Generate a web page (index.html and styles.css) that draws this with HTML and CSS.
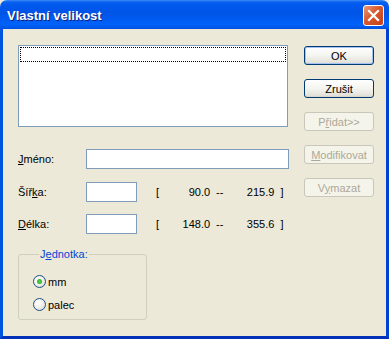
FILE: index.html
```html
<!DOCTYPE html>
<html lang="cs">
<head>
    <meta charset="UTF-8">
    <title>Vlastní velikost</title>
    <link rel="stylesheet" href="styles.css">
</head>
<body>
    <div class="window">
        <div class="titlebar">
            <span class="title">Vlastní velikost</span>
            <button class="close" type="button" aria-label="Zavřít">
                <svg width="13" height="13" viewBox="0 0 13 13">
                    <path d="M2 2 L11 11 M11 2 L2 11" stroke="#fff" stroke-width="2.2" stroke-linecap="square"/>
                </svg>
            </button>
        </div>
        <div class="client">
            <div class="main">
                <div class="listbox">
                    <div class="list-item"></div>
                </div>

                <div class="field-row first">
                    <label for="name"><u>J</u>méno:</label>
                    <input type="text" id="name" class="edit wide">
                </div>

                <div class="field-row">
                    <label for="width">Šíř<u>k</u>a:</label>
                    <input type="text" id="width" class="edit short">
                    <div class="range">
                        <span class="br">[</span>
                        <span class="num min">90.0</span>
                        <span class="dash">--</span>
                        <span class="num max">215.9</span>
                        <span class="br">]</span>
                    </div>
                </div>

                <div class="field-row last">
                    <label for="length"><u>D</u>élka:</label>
                    <input type="text" id="length" class="edit short">
                    <div class="range">
                        <span class="br">[</span>
                        <span class="num min">148.0</span>
                        <span class="dash">--</span>
                        <span class="num max">355.6</span>
                        <span class="br">]</span>
                    </div>
                </div>

                <fieldset class="group">
                    <legend>J<u>e</u>dnotka:</legend>
                    <label class="radio-row"><span class="radio checked"></span>mm</label>
                    <label class="radio-row"><span class="radio"></span>palec</label>
                </fieldset>
            </div>

            <div class="buttons">
                <button type="button" class="btn default">OK</button>
                <button type="button" class="btn">Zrušit</button>
                <button type="button" class="btn" disabled>P<u>ř</u>idat&gt;&gt;</button>
                <button type="button" class="btn" disabled><u>M</u>odifikovat</button>
                <button type="button" class="btn" disabled>V<u>y</u>mazat</button>
            </div>
        </div>
    </div>
</body>
</html>
```

FILE: styles.css
```css
body {
    margin: 0;
    background: #ece9d8;
    font-family: "Liberation Sans", Arial, sans-serif;
    font-size: 11px;
    color: #000;
}
.window {
    width: 389px;
    height: 339px;
    display: flex;
    flex-direction: column;
    box-sizing: border-box;
}
.titlebar {
    height: 29px;
    flex: none;
    display: flex;
    align-items: center;
    justify-content: space-between;
    padding: 0 5px 0 7px;
    border-radius: 7px 7px 0 0;
    background: linear-gradient(to bottom, #3d8cf7 0, #0a62f0 2px, #0058ee 5px, #0054e6 45%, #0062fa 85%, #0050e0 100%);
    box-sizing: border-box;
}
.title {
    color: #fff;
    font-weight: bold;
    font-size: 13px;
    text-shadow: 1px 1px 0 #0a1f83;
    padding-top: 1px;
}
.close {
    width: 21px;
    height: 21px;
    padding: 0;
    border: 1px solid #fff;
    border-radius: 3px;
    background: linear-gradient(135deg, #e89a7c 0, #d9592e 45%, #c4401c 100%);
    display: flex;
    align-items: center;
    justify-content: center;
    margin-top: 2px;
}
.client {
    flex: 1;
    display: flex;
    border-left: 3px solid #0052e0;
    border-right: 3px solid #0040d0;
    border-bottom: 3px solid #0030b8;
    background: #ece9d8;
}
.main {
    width: 286px;
    padding: 16px 0 0 15px;
    box-sizing: border-box;
}
.listbox {
    width: 270px;
    height: 82px;
    border: 1px solid #7f9db9;
    background: #fff;
    box-sizing: border-box;
    padding: 1px;
}
.list-item {
    height: 13px;
    border: 1px dotted #000;
}
.field-row {
    display: flex;
    align-items: center;
    margin-top: 13px;
    height: 20px;
}
.field-row.first {
    margin-top: 22px;
}
.field-row.last {
    margin-top: 12px;
}
.field-row label {
    width: 68px;
    flex: none;
}
.edit {
    height: 20px;
    margin: 0;
    padding: 0 3px;
    border: 1px solid #7f9db9;
    background: #fff;
    box-sizing: border-box;
    font: inherit;
}
.wide {
    width: 203px;
}
.short {
    width: 51px;
}
.range {
    display: flex;
    margin-left: 19px;
}
.num {
    text-align: right;
}
.min {
    width: 51px;
}
.dash {
    margin-left: 6px;
}
.max {
    width: 51px;
}
.range .br:last-child {
    margin-left: 6px;
}
.group {
    margin: 14px 0 0 0;
    width: 129px;
    padding: 14px 0 8px 14px;
    border: 1px solid #d0d0bf;
    border-radius: 3px;
    box-sizing: border-box;
}
.group legend {
    color: #0046d5;
    padding: 0 1px;
    margin-left: 6px;
    line-height: 13px;
}
.radio-row {
    display: flex;
    align-items: center;
    height: 13px;
    gap: 2px;
}
.radio-row + .radio-row {
    margin-top: 10px;
}
.radio {
    width: 13px;
    height: 13px;
    border: 1px solid #1c5180;
    border-radius: 50%;
    box-sizing: border-box;
    background: radial-gradient(circle at 35% 35%, #fff 0, #f4f3ee 40%, #d6d3c6 100%);
    display: flex;
    align-items: center;
    justify-content: center;
}
.radio.checked::after {
    content: "";
    width: 5px;
    height: 5px;
    border-radius: 50%;
    background: radial-gradient(circle, #55d34b 0, #21a121 100%);
}
.buttons {
    display: flex;
    flex-direction: column;
    gap: 14px;
    padding: 17px 0 0 15px;
}
.btn {
    width: 70px;
    height: 19px;
    padding: 0;
    border: 1px solid #003c74;
    border-radius: 3px;
    background: linear-gradient(to bottom, #fff 0, #f4f4f0 50%, #e3e2da 90%, #d6d0c5 100%);
    font: inherit;
    color: #000;
}
.btn.default {
    box-shadow: inset 0 0 0 1px #a6c2f2;
}
.btn:disabled {
    border-color: #c9c7ba;
    background: #f5f4ea;
    color: #aca899;
}
```
